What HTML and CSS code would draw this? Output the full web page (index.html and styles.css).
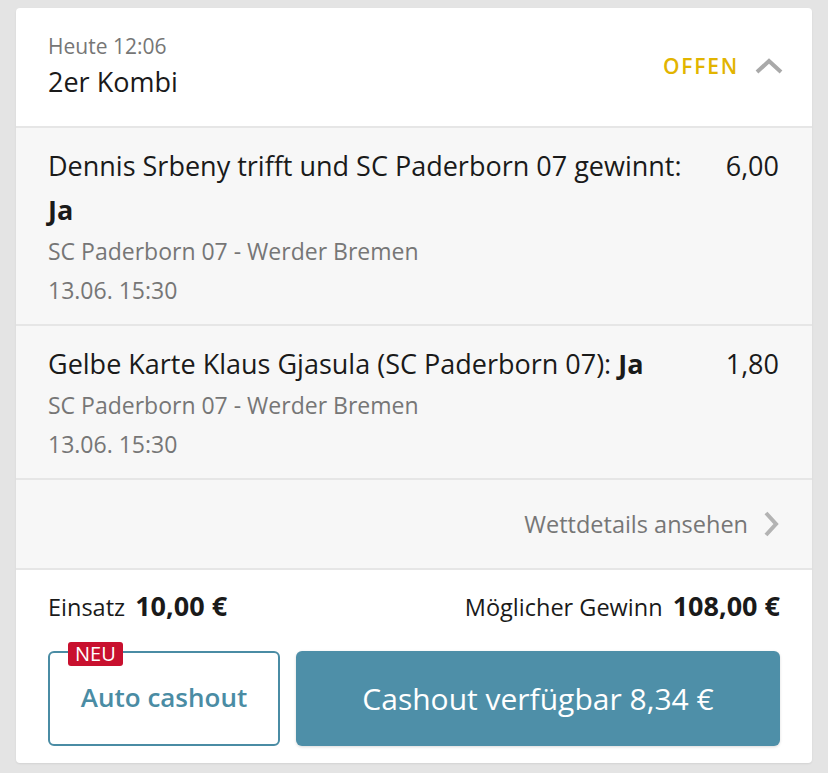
FILE: index.html
```html
<!DOCTYPE html>
<html lang="de">

<head>
    <meta charset="UTF-8">
    <meta name="viewport" content="width=device-width, initial-scale=1.0">
    <title>Wettschein</title>
    <link rel="stylesheet" href="styles.css">
</head>

<body>
    <div class="slip">
        <div class="slip-head">
            <div>
                <div class="slip-date">Heute 12:06</div>
                <div class="slip-title">2er Kombi</div>
            </div>
            <div class="slip-status">
                <span class="status-label">OFFEN</span>
                <svg class="chev-up" width="28" height="18" viewBox="0 0 28 18">
                    <path d="M2 15 L14 4 L26 15" fill="none" stroke="#a9a9a9" stroke-width="4"/>
                </svg>
            </div>
        </div>

        <div class="bet">
            <div class="bet-info">
                <div class="bet-pick">Dennis Srbeny trifft und SC Paderborn 07 gewinnt: <b>Ja</b></div>
                <div class="bet-sub">SC Paderborn 07 - Werder Bremen</div>
                <div class="bet-sub">13.06. 15:30</div>
            </div>
            <div class="bet-odds">6,00</div>
        </div>

        <div class="bet">
            <div class="bet-info">
                <div class="bet-pick">Gelbe Karte Klaus Gjasula (SC Paderborn 07): <b>Ja</b></div>
                <div class="bet-sub">SC Paderborn 07 - Werder Bremen</div>
                <div class="bet-sub">13.06. 15:30</div>
            </div>
            <div class="bet-odds">1,80</div>
        </div>

        <div class="details">
            <span>Wettdetails ansehen</span>
            <svg width="18" height="26" viewBox="0 0 18 26">
                <path d="M4 2 L14 13 L4 24" fill="none" stroke="#b3b3b3" stroke-width="4"/>
            </svg>
        </div>

        <div class="slip-foot">
            <div class="amounts">
                <div>Einsatz <b>10,00 €</b></div>
                <div>Möglicher Gewinn <b>108,00 €</b></div>
            </div>
            <div class="actions">
                <button class="btn-auto">
                    <span class="badge">NEU</span>
                    Auto cashout
                </button>
                <button class="btn-cashout">Cashout verfügbar 8,34 €</button>
            </div>
        </div>
    </div>
</body>

</html>
```

FILE: styles.css
```css
body {
    margin: 0;
    padding: 8px 16px 11px;
    background-color: #e4e4e4;
    font-family: "Open Sans", "Liberation Sans", sans-serif;
    color: #1a1a1a;
}

.slip {
    background-color: #fff;
    border-radius: 4px;
    overflow: hidden;
    box-shadow: 0 1px 2px rgba(0, 0, 0, 0.08);
}

.slip-head {
    display: flex;
    justify-content: space-between;
    align-items: center;
    padding: 26px 29px 28px 32px;
    border-bottom: 2px solid #e6e6e6;
}

.slip-date {
    font-size: 21px;
    line-height: 24px;
    color: #767676;
}

.slip-title {
    font-size: 27px;
    line-height: 32px;
    margin-top: 8px;
}

.slip-status {
    display: flex;
    align-items: center;
    gap: 16px;
}

.status-label {
    color: #e2b400;
    font-size: 21px;
    font-weight: 600;
    letter-spacing: 1.8px;
}

.bet {
    display: flex;
    justify-content: space-between;
    gap: 40px;
    padding: 16px 33px 14px 32px;
    background-color: #f7f7f7;
    border-bottom: 2px solid #e6e6e6;
}

.bet-pick {
    font-size: 27px;
    line-height: 44px;
}

.bet-sub {
    font-size: 23px;
    line-height: 39px;
    color: #767676;
}

.bet-odds {
    font-size: 27px;
    line-height: 44px;
}

.details {
    display: flex;
    justify-content: flex-end;
    align-items: center;
    gap: 14px;
    padding: 31px 32px 31px;
    background-color: #f7f7f7;
    border-bottom: 2px solid #e6e6e6;
    font-size: 23.5px;
    line-height: 24px;
    color: #767676;
}

.slip-foot {
    padding: 22px 32px 17px;
}

.amounts {
    display: flex;
    justify-content: space-between;
    font-size: 23.5px;
    line-height: 28px;
}

.amounts b {
    font-size: 27px;
    font-weight: 700;
    margin-left: 4px;
}

.actions {
    display: flex;
    gap: 16px;
    margin-top: 30px;
}

button {
    height: 95px;
    border-radius: 6px;
    font-family: inherit;
    cursor: pointer;
}

.btn-auto {
    position: relative;
    width: 232px;
    background-color: #fff;
    border: 2px solid #4a8ca4;
    color: #4a8ca4;
    font-size: 26px;
    font-weight: 600;
    padding-bottom: 4px;
}

.badge {
    position: absolute;
    top: -11px;
    left: 18px;
    padding: 0 7px;
    border-radius: 3px;
    background-color: #c8102e;
    color: #fff;
    font-size: 20px;
    font-weight: normal;
    line-height: 24px;
}

.btn-cashout {
    flex: 1;
    border: none;
    background-color: #4e8fa8;
    color: #fff;
    font-size: 30px;
    box-shadow: 0 1px 3px rgba(0, 0, 0, 0.15);
}
```
